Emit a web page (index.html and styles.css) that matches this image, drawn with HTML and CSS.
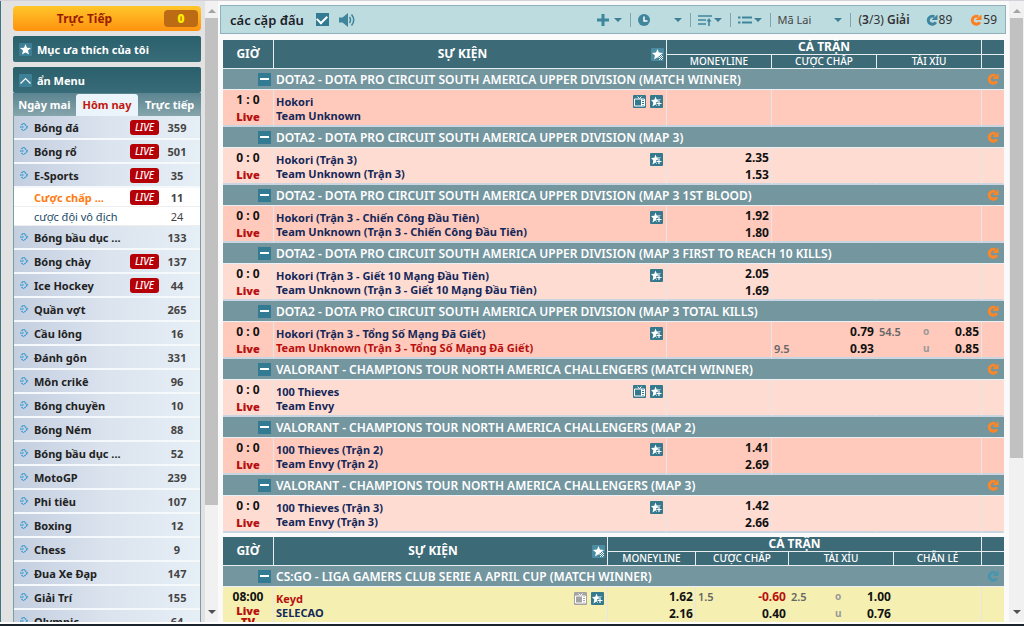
FILE: index.html
```html
<!DOCTYPE html>
<html lang="vi">
<head>
<meta charset="utf-8">
<title>các cặp đấu</title>
<link rel="stylesheet" href="styles.css">
</head>
<body>
<svg class="defs" aria-hidden="true">
  <symbol id="arrow" viewBox="0 0 8 8"><path d="M3.500 0L7.500 4l-4 4L1.500 6M1.500 2l2-2M0 4h3.500" fill="none" stroke="#3f9ccd" stroke-width="1.500" stroke-dasharray="1.600 .5"/></symbol>
  <symbol id="star" viewBox="0 0 13 13"><rect width="13" height="13" rx="1" fill="#3e7f96"/><path d="M6.500 1l1.500 3.700 4 .3-3 2.600 1 4-3.500-2.200-3.500 2.200 1-4L1 5l4-.3z" fill="#fff"/></symbol>
  <symbol id="staradd" viewBox="0 0 13 13"><rect width="13" height="13" rx="1" fill="#35798f"/><path d="M5.500 1.500l1.200 3H11L8.500 6.500 7 9v2L5.500 9.500 2.500 11.500l.8-4L1 5l3.300-.3z" fill="#fff"/><path d="M9 5.500v6M6 8.500h6" stroke="#35798f" stroke-width="2.500"/><path d="M9 6v5M6.500 8.500h5" stroke="#fff" stroke-width="1.200"/></symbol>
  <symbol id="stardot" viewBox="0 0 13 13"><rect width="13" height="13" rx="1" fill="#4a8ca2"/><path d="M6.500 1l1.400 3.600 4.100.4-3 2.500.8 4-3.300-2.200L3 11.500l1-4L1 5l4-.4z" fill="#fff"/><path d="M8 7h5v5H7z" fill="#3d7c92"/><path d="M8 7h1v1H8zM10 7h1v1h-1zM9 8h1v1H9zM11 8h1v1h-1zM8 9h1v1H8zM10 9h1v1h-1zM9 10h1v1H9zM11 10h1v1h-1zM8 11h1v1H8zM10 11h1v1h-1z" fill="#fff"/></symbol>
  <symbol id="tv" viewBox="0 0 13 13"><rect width="13" height="13" rx="1" fill="currentColor"/><path d="M4.500 1.500L6.500 3.500l2-2" fill="none" stroke="#fff"/><path d="M1.500 4h10v7h-10zM8.500 4v7" fill="none" stroke="#fff"/><path d="M9 5.500h2.500M9 7.500h2.500M9 9.500h2.500" stroke="#fff"/></symbol>
  <symbol id="refresh" viewBox="0 0 12 12"><path d="M9.800 8.200A4 4 0 1 1 8.300 2.700" fill="none" stroke="currentColor" stroke-width="3"/><path d="M5.500 6H11.500V.5z" fill="currentColor"/></symbol>
  <symbol id="down" viewBox="0 0 8 4"><path d="M0 0h8L4 4z" fill="currentColor"/></symbol>
</svg>
<div class="app">
  <div class="frames">
    <aside class="side">
      <button class="live-btn"><span>Trực Tiếp</span><b>0</b></button>
      <button class="bar"><svg><use href="#star"/></svg>Mục ưa thích của tôi</button>
      <section class="menu">
        <button class="bar"><svg viewBox="0 0 13 13"><rect width="13" height="13" rx="1" fill="#3e8096"/><path d="M1.500 9.500l5-5 5 5" fill="none" stroke="#fff" stroke-width="1.200"/></svg>ẩn Menu</button>
        <nav class="tabs"><a href="#">Ngày mai</a><a href="#" class="on">Hôm nay</a><a href="#">Trực tiếp</a></nav>
        <ul class="sports">
          <li><svg><use href="#arrow"/></svg><a href="#">Bóng đá</a><em>LIVE</em><i>359</i></li>
          <li><svg><use href="#arrow"/></svg><a href="#">Bóng rổ</a><em>LIVE</em><i>501</i></li>
          <li><svg><use href="#arrow"/></svg><a href="#">E-Sports</a><em>LIVE</em><i>35</i></li>
          <li class="sub hot"><a href="#">Cược chấp ...</a><em>LIVE</em><i>11</i></li>
          <li class="sub"><a href="#">cược đội vô địch</a><i>24</i></li>
          <li><svg><use href="#arrow"/></svg><a href="#">Bóng bầu dục ...</a><i>133</i></li>
          <li><svg><use href="#arrow"/></svg><a href="#">Bóng chày</a><em>LIVE</em><i>137</i></li>
          <li><svg><use href="#arrow"/></svg><a href="#">Ice Hockey</a><em>LIVE</em><i>44</i></li>
          <li><svg><use href="#arrow"/></svg><a href="#">Quần vợt</a><i>265</i></li>
          <li><svg><use href="#arrow"/></svg><a href="#">Cầu lông</a><i>16</i></li>
          <li><svg><use href="#arrow"/></svg><a href="#">Đánh gôn</a><i>331</i></li>
          <li><svg><use href="#arrow"/></svg><a href="#">Môn crikê</a><i>96</i></li>
          <li><svg><use href="#arrow"/></svg><a href="#">Bóng chuyền</a><i>10</i></li>
          <li><svg><use href="#arrow"/></svg><a href="#">Bóng Ném</a><i>88</i></li>
          <li><svg><use href="#arrow"/></svg><a href="#">Bóng bầu dục ...</a><i>52</i></li>
          <li><svg><use href="#arrow"/></svg><a href="#">MotoGP</a><i>239</i></li>
          <li><svg><use href="#arrow"/></svg><a href="#">Phi tiêu</a><i>107</i></li>
          <li><svg><use href="#arrow"/></svg><a href="#">Boxing</a><i>12</i></li>
          <li><svg><use href="#arrow"/></svg><a href="#">Chess</a><i>9</i></li>
          <li><svg><use href="#arrow"/></svg><a href="#">Đua Xe Đạp</a><i>147</i></li>
          <li><svg><use href="#arrow"/></svg><a href="#">Giải Trí</a><i>155</i></li>
          <li><svg><use href="#arrow"/></svg><a href="#">Olympic</a><i>64</i></li>
        </ul>
      </section>
    </aside>
    <div class="scroll"><svg class="up"><use href="#down"/></svg><div class="track"><div class="thumb"></div></div><svg><use href="#down"/></svg></div>
    <main>
      <header class="toolbar">
        <h1><label for="all">các cặp đấu</label></h1>
        <input type="checkbox" id="all" checked>
        <button class="sound" aria-label="Âm thanh"><svg viewBox="0 0 16 14"><path d="M0 4.500h3.500L9 0v14L3.500 9.500H0z" fill="#3f859b"/><path d="M10.500 4q2 3 0 6M12.500 1.500q4.500 5.500 0 11" fill="none" stroke="#3f859b" stroke-width="1.500"/></svg></button>
        <button class="tool first" aria-label="Thêm"><svg class="ic" viewBox="0 0 12 12"><path d="M6 0v12M0 6h12" stroke="#3f859b" stroke-width="3"/></svg><svg class="dn"><use href="#down"/></svg></button>
        <button class="tool wide" aria-label="Thời gian"><svg class="ic" viewBox="0 0 12 12"><circle cx="6" cy="6" r="6" fill="#3f859b"/><path d="M6 2.500V7h3.500" fill="none" stroke="#fff" stroke-width="1.500"/></svg><svg class="dn"><use href="#down"/></svg></button>
        <button class="tool" aria-label="Sắp xếp"><svg class="ic lg" viewBox="0 0 14 12"><path d="M0 2h14M0 6h8M0 10h8" stroke="#3f859b" stroke-width="1.600"/><path d="M11 12V6" stroke="#3f859b" stroke-width="1.600"/><path d="M8.500 7.500L11 4l2.500 3.500z" fill="#3f859b"/></svg><svg class="dn"><use href="#down"/></svg></button>
        <button class="tool" aria-label="Danh sách"><svg class="ic lg" viewBox="0 0 14 12"><path d="M0 3.500h2.500M4 3.500h10M0 8.500h2.500M4 8.500h10" stroke="#3f859b" stroke-width="2"/></svg><svg class="dn"><use href="#down"/></svg></button>
        <div class="tool odds"><select aria-label="Loại tỷ lệ"><option>Mã Lai</option></select><svg class="dn"><use href="#down"/></svg></div>
        <button class="leagues">(<b>3</b>/3) <b>Giải</b></button>
        <button class="count blue"><svg><use href="#refresh"/></svg><span>89</span></button>
        <button class="count orange"><svg><use href="#refresh"/></svg><span>59</span></button>
      </header>

      <table class="odds-table">
        <colgroup><col class="c-time"><col><col class="c-a"><col class="c-a"><col class="c-a"><col class="c-end"></colgroup>
        <thead>
          <tr><th rowspan="2">GIỜ</th><th rowspan="2"><div class="evh"><span>SỰ KIỆN</span><svg><use href="#stardot"/></svg></div></th><th colspan="3" class="grp">CẢ TRẬN</th><th class="grp"></th></tr>
          <tr class="types"><th>MONEYLINE</th><th>CƯỢC CHẤP</th><th>TÀI XỈU</th><th></th></tr>
        </thead>
        <tbody>
          <tr class="league"><td colspan="6"><div><button aria-label="Thu gọn"></button><span>DOTA2 - DOTA PRO CIRCUIT SOUTH AMERICA UPPER DIVISION (MATCH WINNER)</span><svg><use href="#refresh"/></svg></div></td></tr>
          <tr class="match a"><td class="time">1 : 0<b>Live</b></td><td><div class="ev"><p>Hokori<br>Team Unknown</p><svg><use href="#tv"/></svg><svg><use href="#staradd"/></svg></div></td><td></td><td class="open"></td><td></td><td></td></tr>
          <tr class="league"><td colspan="6"><div><button aria-label="Thu gọn"></button><span>DOTA2 - DOTA PRO CIRCUIT SOUTH AMERICA UPPER DIVISION (MAP 3)</span><svg><use href="#refresh"/></svg></div></td></tr>
          <tr class="match b"><td class="time">0 : 0<b>Live</b></td><td><div class="ev"><p>Hokori (Trận 3)<br>Team Unknown (Trận 3)</p><svg><use href="#staradd"/></svg></div></td><td class="num">2.35<br>1.53</td><td class="open"></td><td></td><td></td></tr>
          <tr class="league"><td colspan="6"><div><button aria-label="Thu gọn"></button><span>DOTA2 - DOTA PRO CIRCUIT SOUTH AMERICA UPPER DIVISION (MAP 3 1ST BLOOD)</span><svg><use href="#refresh"/></svg></div></td></tr>
          <tr class="match a"><td class="time">0 : 0<b>Live</b></td><td><div class="ev"><p>Hokori (Trận 3 - Chiến Công Đầu Tiên)<br>Team Unknown (Trận 3 - Chiến Công Đầu Tiên)</p><svg><use href="#staradd"/></svg></div></td><td class="num">1.92<br>1.80</td><td class="open"></td><td></td><td></td></tr>
          <tr class="league"><td colspan="6"><div><button aria-label="Thu gọn"></button><span>DOTA2 - DOTA PRO CIRCUIT SOUTH AMERICA UPPER DIVISION (MAP 3 FIRST TO REACH 10 KILLS)</span><svg><use href="#refresh"/></svg></div></td></tr>
          <tr class="match b"><td class="time">0 : 0<b>Live</b></td><td><div class="ev"><p>Hokori (Trận 3 - Giết 10 Mạng Đầu Tiên)<br>Team Unknown (Trận 3 - Giết 10 Mạng Đầu Tiên)</p><svg><use href="#staradd"/></svg></div></td><td class="num">2.05<br>1.69</td><td class="open"></td><td></td><td></td></tr>
          <tr class="league"><td colspan="6"><div><button aria-label="Thu gọn"></button><span>DOTA2 - DOTA PRO CIRCUIT SOUTH AMERICA UPPER DIVISION (MAP 3 TOTAL KILLS)</span><svg><use href="#refresh"/></svg></div></td></tr>
          <tr class="match a"><td class="time">0 : 0<b>Live</b></td><td><div class="ev"><p>Hokori (Trận 3 - Tổng Số Mạng Đã Giết)<br><span class="red">Team Unknown (Trận 3 - Tổng Số Mạng Đã Giết)</span></p><svg><use href="#staradd"/></svg></div></td><td></td><td class="open"><div class="line"><i></i><span>0.79</span></div><div class="line"><i>9.5</i><span>0.93</span></div></td><td><div class="line"><i>54.5</i><em>o</em><span>0.85</span></div><div class="line"><i></i><em>u</em><span>0.85</span></div></td><td></td></tr>
          <tr class="league"><td colspan="6"><div><button aria-label="Thu gọn"></button><span>VALORANT - CHAMPIONS TOUR NORTH AMERICA CHALLENGERS (MATCH WINNER)</span><svg><use href="#refresh"/></svg></div></td></tr>
          <tr class="match b"><td class="time">0 : 0<b>Live</b></td><td><div class="ev"><p>100 Thieves<br>Team Envy</p><svg><use href="#tv"/></svg><svg><use href="#staradd"/></svg></div></td><td></td><td class="open"></td><td></td><td></td></tr>
          <tr class="league"><td colspan="6"><div><button aria-label="Thu gọn"></button><span>VALORANT - CHAMPIONS TOUR NORTH AMERICA CHALLENGERS (MAP 2)</span><svg><use href="#refresh"/></svg></div></td></tr>
          <tr class="match a"><td class="time">0 : 0<b>Live</b></td><td><div class="ev"><p>100 Thieves (Trận 2)<br>Team Envy (Trận 2)</p><svg><use href="#staradd"/></svg></div></td><td class="num">1.41<br>2.69</td><td class="open"></td><td></td><td></td></tr>
          <tr class="league"><td colspan="6"><div><button aria-label="Thu gọn"></button><span>VALORANT - CHAMPIONS TOUR NORTH AMERICA CHALLENGERS (MAP 3)</span><svg><use href="#refresh"/></svg></div></td></tr>
          <tr class="match b"><td class="time">0 : 0<b>Live</b></td><td><div class="ev"><p>100 Thieves (Trận 3)<br>Team Envy (Trận 3)</p><svg><use href="#staradd"/></svg></div></td><td class="num">1.42<br>2.66</td><td class="open"></td><td></td><td></td></tr>
        </tbody>
      </table>

      <table class="odds-table">
        <colgroup><col class="c-time"><col><col class="c-b"><col class="c-c"><col class="c-a"><col class="c-b"><col class="c-end"></colgroup>
        <thead>
          <tr><th rowspan="2">GIỜ</th><th rowspan="2"><div class="evh"><span>SỰ KIỆN</span><svg><use href="#stardot"/></svg></div></th><th colspan="4" class="grp">CẢ TRẬN</th><th class="grp"></th></tr>
          <tr class="types"><th>MONEYLINE</th><th>CƯỢC CHẤP</th><th>TÀI XỈU</th><th>CHẴN LẺ</th><th></th></tr>
        </thead>
        <tbody>
          <tr class="league idle"><td colspan="7"><div><button aria-label="Thu gọn"></button><span>CS:GO - LIGA GAMERS CLUB SERIE A APRIL CUP (MATCH WINNER)</span><svg><use href="#refresh"/></svg></div></td></tr>
          <tr class="match y"><td class="time">08:00<b>Live</b><b>TV</b></td><td><div class="ev"><p><span class="red">Keyd</span><br>SELECAO</p><svg class="off"><use href="#tv"/></svg><svg><use href="#staradd"/></svg></div></td><td class="num">1.62<br>2.16</td><td class="open"><div class="line"><i>1.5</i><span class="red">-0.60</span></div><div class="line"><i></i><span>0.40</span></div></td><td class="open"><div class="line"><i>2.5</i><em>o</em><span>1.00</span></div><div class="line"><i></i><em>u</em><span>0.76</span></div></td><td></td><td></td></tr>
        </tbody>
      </table>
    </main>
    <div class="scroll right"><svg class="up"><use href="#down"/></svg><div class="track"><div class="thumb"></div></div><svg><use href="#down"/></svg></div>
  </div>
  <footer></footer>
</div>
</body>
</html>
```
FILE: styles.css
```css
* { box-sizing: border-box; }
body { margin: 0; font: 700 11px "Noto Sans", sans-serif; color: #111; overflow: hidden; }
button, select { font: inherit; color: inherit; background: none; border: 0; padding: 0; margin: 0; }
a { color: inherit; text-decoration: none; }
svg { display: block; flex: none; }
.defs { position: absolute; width: 0; height: 0; }
.app { height: 100vh; display: flex; flex-direction: column; background: #fafafa; border-top: 1px solid #d4d2d8; }
.frames { flex: 1; min-height: 0; display: flex; overflow: hidden; }
footer { flex: none; height: 4px; background: #1b242d; border-top: 2px solid #fff; }

/* sidebar */
.side { flex: none; width: 205px; padding: 5px 4px 0 12px; background: #e2e2e2; border-left: 1px solid #3e7482; display: flex; flex-direction: column; overflow: hidden; }
.live-btn { flex: none; height: 25px; display: flex; align-items: center; padding: 0 3px 0 0; border-radius: 4px; background: linear-gradient(#ffc629, #ff9210); color: #9c1c00; font-size: 12px; }
.live-btn span { flex: 1; padding-right: 8px; text-align: center; }
.live-btn b { width: 34px; height: 17px; line-height: 17px; border-radius: 4px; background: #bd6a14; color: #ffee00; font-size: 12px; }
.bar { flex: none; width: 100%; height: 26px; display: flex; align-items: center; gap: 5px; padding: 0 6px; border-radius: 2px; background: linear-gradient(#2a5f6c, #386c79); color: #fff; }
.bar svg { width: 13px; height: 13px; }
.side > .bar { margin: 5px 0; }
.menu { display: flex; flex-direction: column; }
.tabs { height: 23px; display: flex; align-items: flex-end; justify-content: space-between; background: linear-gradient(#5b8490, #86a5ab); color: #fff; }
.tabs a { flex: 1; height: 23px; line-height: 23px; text-align: center; white-space: nowrap; }
.tabs .on { height: 22px; line-height: 22px; border-radius: 3px 3px 0 0; background: #eaf4fa; color: #c3170f; }
.sports { list-style: none; margin: 0; padding: 0; border: solid #7d9da6; border-width: 0 1px; color: #222; }
.sports li { height: 24px; display: flex; align-items: center; padding: 0 8px 0 6px; border-bottom: 2px solid #f6f9fc; background: linear-gradient(90deg, #c3cedf, #dbe3ee 50%, #e6eef6); }
.sports li svg { width: 8px; height: 8px; margin-right: 6px; }
.sports a { flex: 1; white-space: nowrap; }
.sports em { width: 29px; height: 15px; line-height: 15px; border-radius: 3px; background: #b50008; color: #fff; font-size: 10px; font-weight: 500; text-align: center; }
.sports i { width: 30px; margin-left: 3px; font-style: normal; text-align: center; color: #444; }
.sports .sub { height: 19px; padding-left: 20px; background: #fff; border-bottom: 1px solid #eee; font-weight: 400; color: #204a66; }
.sports .hot { font-weight: 700; color: #ff7b12; }

/* frame scrollbars */
.scroll { flex: none; width: 13px; display: flex; flex-direction: column; align-items: center; padding: 8px 0; background: #f1f1f1; color: #505050; }
.scroll svg { width: 8px; height: 4px; }
.scroll .up { color: #a3a3a3; transform: rotate(180deg); }
.scroll .track { flex: 1; width: 100%; padding: 5px 0; }
.scroll .thumb { height: 83%; background: #c1c1c1; }
.scroll.right { width: 15px; padding: 8px 1px; }
.scroll.right .thumb { height: 75%; }

/* main frame */
main { flex: 1; min-width: 0; padding: 4px 3px 0 2px; display: flex; flex-direction: column; overflow: hidden; }
.toolbar { flex: none; height: 29px; display: flex; align-items: center; margin-bottom: 6px; padding: 0 8px 0 9px; background: #bddce0; border: 1px solid #90b0bc; font-size: 12px; font-weight: 400; color: #333; }
.toolbar h1 { margin: 0 12px 0 0; font-size: 13px; font-weight: 600; color: #1d1d28; }
.toolbar input { appearance: none; width: 13px; height: 13px; margin: 0; background: #327b93; display: grid; place-items: center; }
.toolbar input:checked::after { content: ""; width: 8px; height: 5px; margin-bottom: 3px; border: solid #fff; border-width: 0 0 2px 2px; transform: rotate(-45deg); }
.sound { margin-left: 10px; }
.sound svg { width: 16px; height: 14px; }
.tool { height: 14px; display: flex; align-items: center; justify-content: space-between; width: 40px; padding: 0 8px 0 7px; border-left: 1px solid #7da5b2; color: #3f7f95; }
.tool.first { margin-left: auto; border: 0; }
.tool.wide { width: 60px; }
.tool.odds { width: 80px; padding-left: 6px; }
.ic { width: 12px; height: 12px; }
.ic.lg { width: 14px; }
.dn { width: 8px; height: 4px; }
.toolbar select { appearance: none; flex: 1; color: #444; font-size: 11px; }
.leagues { height: 14px; line-height: 14px; padding: 0 16px 0 7px; border-left: 1px solid #7da5b2; white-space: nowrap; }
.leagues b { font-weight: 600; }
.count { display: flex; align-items: center; gap: 1px; }
.count + .count { margin-left: 18px; }
.count svg { width: 12px; height: 12px; }
.blue svg { color: #3f859f; }
.orange svg { color: #ff7f1e; }

/* odds tables */
.odds-table { flex: none; width: calc(100% - 5px); margin: 0 2px 4px 3px; table-layout: fixed; border-collapse: separate; border-spacing: 0; }
.c-time { width: 51px; }
.c-a { width: 105px; }
.c-b { width: 88px; }
.c-c { width: 93px; }
.c-end { width: 22px; }
.odds-table td, .odds-table th { padding: 0; vertical-align: top; }
.odds-table th { height: 14px; line-height: 14px; vertical-align: middle; text-align: center; color: #fff; font-size: 12px; background: #3d6a77; border-right: 1px solid #e8eef0; border-bottom: 1px solid #e8eef0; white-space: nowrap; }
.odds-table th:last-child { border-right: 0; }
.odds-table .grp { height: 15px; line-height: 14px; }
.odds-table .types th { font-size: 10px; font-weight: 500; line-height: 13px; }
.evh { display: flex; align-items: center; padding-right: 2px; }
.evh span { flex: 1; }
.evh svg { width: 13px; height: 13px; }
.league td { height: 21px; background: #74969f; border-bottom: 1px solid #eaf0f6; color: #fff; }
.league div { height: 20px; display: flex; align-items: center; padding: 0 5px 0 35px; }
.league span { flex: 1; margin-left: 5px; white-space: nowrap; font-size: 12px; font-weight: 600; }
.league button { width: 13px; height: 13px; background: #327b93; display: grid; place-items: center; }
.league button::before { content: ""; width: 9px; height: 2px; background: #fff; }
.league svg { width: 12px; height: 12px; color: #ff8624; }
.league.idle svg { color: #4895ae; }
.match td { height: 37px; line-height: 17px; border-right: 1px solid #e9e4e6; border-bottom: 2px solid #c9d5e0; }
.odds-table .match td:last-child, .odds-table .match .open { border-right-color: transparent; }
.a td { background: #ffcabb; }
.b td { background: #ffdcd2; }
.y td { background: #f5f0b1; }
.odds-table .time { padding-top: 1px; text-align: center; }
.time { font-size: 12px; }
.time b { display: block; color: #b80f0f; font-size: 11px; }
.y .time b { line-height: 11px; }
.ev { display: flex; gap: 4px; padding: 5px 3px 0 2px; }
.ev p { flex: 1; margin: 0; line-height: 14px; font-size: 11px; color: #14285a; white-space: nowrap; }
.ev svg { width: 13px; height: 13px; color: #35798f; }
.ev .off { color: #a3a3a3; }
.ev .red, .red { color: #b80f0f; }
.num { text-align: right; font-size: 12px; }
.odds-table .num { padding: 1px 2px 0 0; }
.odds-table .match .line:first-child { margin-top: 1px; }
.line { display: flex; height: 17px; padding: 0 2px; font-size: 12px; }
.line i { flex: 1; font-style: normal; font-size: 11px; font-weight: 600; color: #666; }
.line em { width: 10px; font-style: normal; font-size: 10px; color: #999; }
.line em + span { width: 46px; text-align: right; }
```
